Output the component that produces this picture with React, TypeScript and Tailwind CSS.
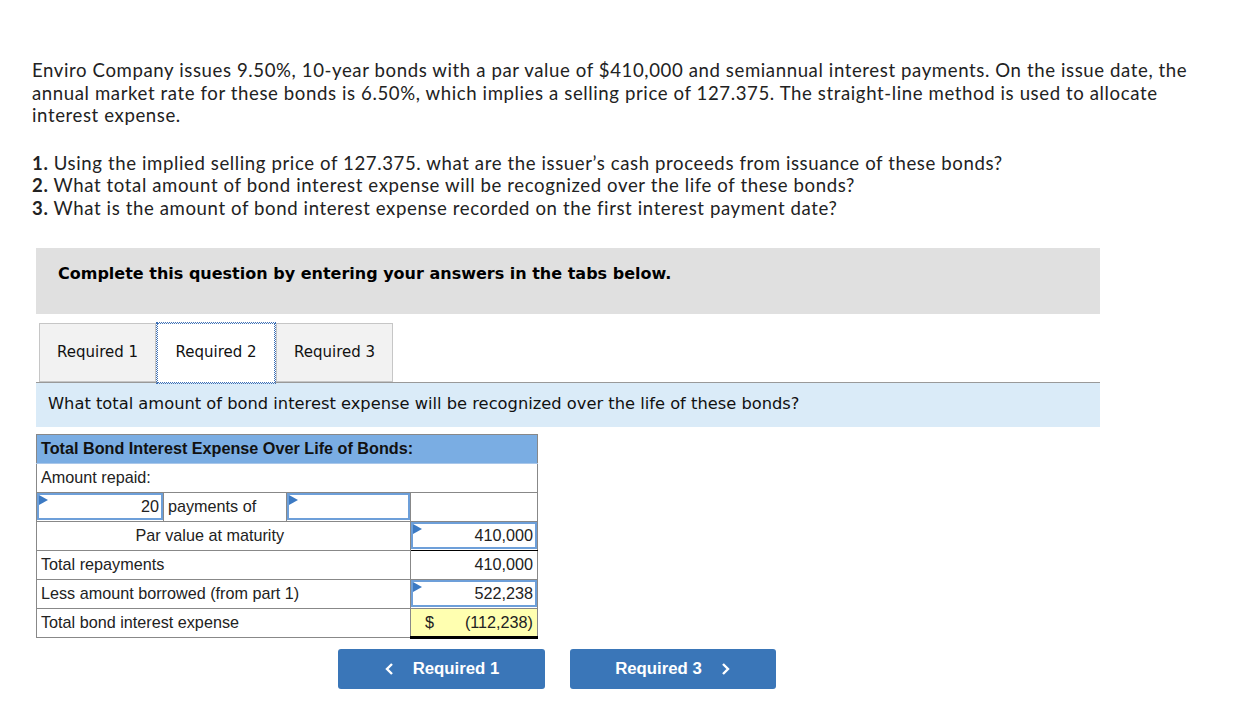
import React from "react";

const Marker = () => (
  <span className="absolute left-0 top-0 w-0 h-0 border-t-[5px] border-b-[5px] border-l-[9px] border-t-transparent border-b-transparent border-l-[#3c7ac3]" />
);

const InputBox = ({ value }: { value?: string }) => (
  <div className="relative h-[27px] border-2 border-[#6d9fd9] bg-white flex items-center justify-end pr-[2px]">
    <Marker />
    {value}
  </div>
);

const Tab = ({ label, active }: { label: string; active?: boolean }) => (
  <div
    className={
      active
        ? "w-[118px] h-[60px] -mb-px bg-white border border-dotted border-[#3c6fb5] outline outline-1 outline-dotted outline-[#3c6fb5] flex items-center justify-center"
        : "w-[117px] h-[59px] bg-[#f2f2f2] border border-[#c6c6c6] flex items-center justify-center"
    }
  >
    {label}
  </div>
);

export default function App() {
  return (
    <div className="w-[1236px] h-[709px] bg-white text-[#222] overflow-hidden">
      <div className="pl-[32px] pt-[59px] font-['Lato','Liberation_Sans',sans-serif] text-[18.6px] leading-[22.6px] tracking-[0.6px] text-[#222] whitespace-nowrap">
        <p>
          Enviro Company issues 9.50%, 10-year bonds with a par value of $410,000 and semiannual interest payments. On the issue date, the
          <br />
          annual market rate for these bonds is 6.50%, which implies a selling price of 127.375. The straight-line method is used to allocate
          <br />
          interest expense.
        </p>
        <p className="mt-[25px]">
          <b>1.</b> Using the implied selling price of 127.375. what are the issuer’s cash proceeds from issuance of these bonds?
          <br />
          <b>2.</b> What total amount of bond interest expense will be recognized over the life of these bonds?
          <br />
          <b>3.</b> What is the amount of bond interest expense recorded on the first interest payment date?
        </p>
      </div>

      <div className="ml-[36px] w-[1064px] mt-[28px] font-['DejaVu_Sans','Verdana',sans-serif]">
        <div className="h-[66px] bg-[#e0e0e0] pt-[16px] pl-[22px] text-[16px] leading-[20px] font-bold text-black">
          Complete this question by entering your answers in the tabs below.
        </div>

        <div className="mt-[9px] flex items-end pl-[3px] gap-[1px] text-[15px] text-[#111]">
          <Tab label="Required 1" />
          <Tab label="Required 2" active />
          <Tab label="Required 3" />
        </div>

        <div className="h-[45px] bg-[#daebf8] border-t border-[#999] flex items-center pl-[12px] text-[16.3px] text-[#111]">
          What total amount of bond interest expense will be recognized over the life of these bonds?
        </div>

        <table className="mt-[7px] border-collapse font-['Liberation_Sans',Arial,sans-serif] text-[16.2px] text-[#222] table-fixed w-[501px]">
          <colgroup>
            <col className="w-[127px]" />
            <col className="w-[123px]" />
            <col className="w-[124px]" />
            <col className="w-[127px]" />
          </colgroup>
          <tbody>
            <tr className="h-[29px]">
              <td colSpan={4} className="bg-[#7aade3] border border-[#888] border-b-[#a9c7ea] px-[4px] font-bold text-[#111]">
                Total Bond Interest Expense Over Life of Bonds:
              </td>
            </tr>
            <tr className="h-[29px]">
              <td colSpan={4} className="border border-[#888] px-[4px]">
                Amount repaid:
              </td>
            </tr>
            <tr className="h-[29px]">
              <td className="border border-[#888] p-0">
                <InputBox value="20" />
              </td>
              <td className="border border-[#888] px-[4px]">payments of</td>
              <td className="border border-[#888] p-0">
                <InputBox />
              </td>
              <td className="border border-[#888]"></td>
            </tr>
            <tr className="h-[29px]">
              <td colSpan={3} className="border border-[#888] p-0">
                <div className="w-[250px] text-right pr-[3px]">Par value at maturity</div>
              </td>
              <td className="border border-[#888] border-b-black p-0">
                <InputBox value="410,000" />
              </td>
            </tr>
            <tr className="h-[29px]">
              <td colSpan={3} className="border border-[#888] px-[4px]">
                Total repayments
              </td>
              <td className="border border-[#888] text-right pr-[4px]">410,000</td>
            </tr>
            <tr className="h-[29px]">
              <td colSpan={3} className="border border-[#888] px-[4px]">
                Less amount borrowed (from part 1)
              </td>
              <td className="border border-[#888] p-0">
                <InputBox value="522,238" />
              </td>
            </tr>
            <tr className="h-[29px]">
              <td colSpan={3} className="border border-[#888] px-[4px]">
                Total bond interest expense
              </td>
              <td className="border border-[#888] border-b-[3px] border-b-black border-b-double bg-[#ffffb0] p-0">
                <div className="flex items-center justify-between pl-[14px] pr-[4px]">
                  <span>$</span>
                  <span>(112,238)</span>
                </div>
              </td>
            </tr>
          </tbody>
        </table>
      </div>

      <div className="mt-[10px] ml-[338px] flex gap-[25px] font-['Liberation_Sans',Arial,sans-serif] text-[16.8px] font-bold text-white">
        <button className="w-[207px] h-[40px] bg-[#3a76b8] rounded-[3px] flex items-center justify-center gap-[17px]">
          <svg width="12" height="14" viewBox="0 0 12 14" fill="none" stroke="white" strokeWidth="2.4">
            <path d="M8 2 L3 7 L8 12" />
          </svg>
          Required 1
        </button>
        <button className="w-[206px] h-[40px] bg-[#3a76b8] rounded-[3px] flex items-center justify-center gap-[17px]">
          Required 3
          <svg width="12" height="14" viewBox="0 0 12 14" fill="none" stroke="white" strokeWidth="2.4">
            <path d="M4 2 L9 7 L4 12" />
          </svg>
        </button>
      </div>
    </div>
  );
}
